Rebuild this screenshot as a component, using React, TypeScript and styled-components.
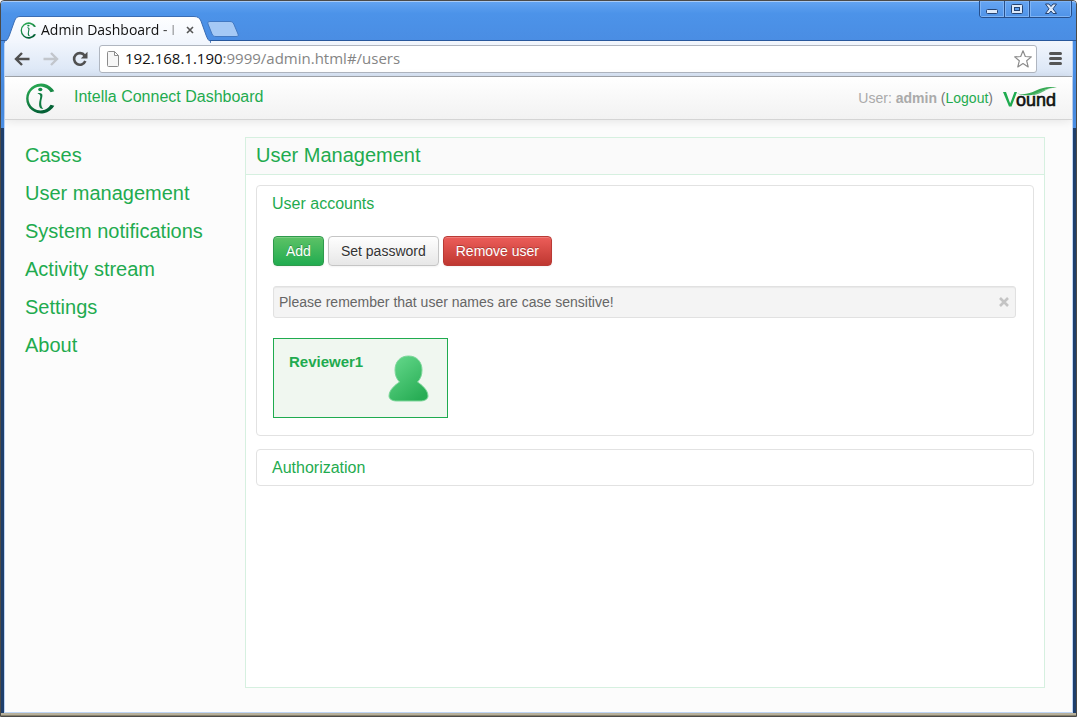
import React from "react";
import styled, { createGlobalStyle } from "styled-components";

const GREEN = "#1fab4f";

const GlobalStyle = createGlobalStyle`
  *, *::before, *::after { box-sizing: border-box; }
  body {
    margin: 0;
    font-family: "Liberation Sans", Arial, sans-serif;
    font-size: 14px;
    line-height: 20px;
    color: #666;
  }
  a { color: ${GREEN}; text-decoration: none; }
  button { font-family: inherit; }
`;

const BrowserWindow = styled.div`
  min-height: 100vh;
  display: flex;
  flex-direction: column;
  border: 1px solid #4b4a48;
  border-radius: 4px 4px 0 0;
  background: linear-gradient(#4a8fe6 0 127px, #1f3f6c 127px);
`;

const TitleBar = styled.div`
  height: 40px;
  display: flex;
  align-items: flex-start;
  justify-content: space-between;
  padding: 0 4px 0 6px;
  border-top: 1px solid #a9cbf6;
  border-bottom: 1px solid #28589c;
  border-radius: 3px 3px 0 0;
  background: linear-gradient(#62a3f1, #4c93e9 30%, #4a8de3);
`;

const TabStrip = styled.div`
  display: flex;
  align-items: flex-start;
  padding-top: 14px;
`;

const Tab = styled.div`
  position: relative;
  z-index: 1;
  width: 200px;
  height: 26px;
  display: flex;
  align-items: center;
  gap: 4px;
  padding: 2px 11px 0 13px;
`;

const TabShape = styled.svg`
  position: absolute;
  left: -3px;
  top: 0;
  z-index: -1;
`;

const TabTitle = styled.span`
  flex: 1;
  overflow: hidden;
  white-space: nowrap;
  font: 14px/20px "Open Sans", "Noto Sans", sans-serif;
  color: #111;
  mask-image: linear-gradient(90deg, #000 120px, transparent 142px);
`;

const TabClose = styled.button`
  width: 12px;
  height: 12px;
  padding: 0;
  border: 0;
  background: none;
  display: grid;
  place-items: center;
`;

const NewTab = styled.button`
  height: 18px;
  padding: 0;
  border: 0;
  margin-top: 5px;
  background: none;
`;

const WindowControls = styled.div`
  display: flex;
  height: 17px;
  border: 1px solid #264f8c;
  border-top: 0;
  border-radius: 0 0 4px 4px;
  overflow: hidden;
  margin-top: -1px;
`;

const WindowButton = styled.button<{ $width: number }>`
  width: ${(p) => p.$width}px;
  padding: 0;
  border: 0;
  background: linear-gradient(#66a5f2, #4f93e8);
  box-shadow: inset 0 0 0 1px #7fb4f5;
  display: grid;
  place-items: center;
  & + & { border-left: 1px solid #264f8c; }
`;

const Client = styled.div`
  flex: 1;
  display: flex;
  flex-direction: column;
  margin: 0 3px;
  border: 1px solid #bdd4f5;
  border-top: 0;
  background: #fcfcfc;
`;

const Toolbar = styled.div`
  display: flex;
  align-items: center;
  height: 36px;
  padding: 0 7px;
  border-bottom: 1px solid #a3a7ad;
  background: linear-gradient(#f2f6fd, #d9e5f5);
`;

const ToolButton = styled.button`
  width: 20px;
  height: 20px;
  padding: 0;
  border: 0;
  background: none;
  display: grid;
  place-items: center;
`;

const NavButtons = styled.div`
  display: flex;
  gap: 9px;
  margin-right: 9px;
`;

const AddressBar = styled.div`
  flex: 1;
  height: 28px;
  display: flex;
  align-items: center;
  gap: 6px;
  padding: 0 3px 0 7px;
  margin-right: 8px;
  border: 1px solid #b0b6c0;
  border-radius: 3px;
  background: #fff;
`;

const Address = styled.div`
  flex: 1;
  padding-bottom: 2px;
  font: 15px/20px "Open Sans", "Noto Sans", sans-serif;
  color: #858585;
  strong { font-weight: 400; color: #111; }
`;

const AppHeader = styled.header`
  display: flex;
  align-items: center;
  height: 43px;
  padding: 0 14px 0 20px;
  border-bottom: 1px solid #d4d4d4;
  background: linear-gradient(#fff, #f2f2f2);
  box-shadow: 0 1px 10px rgba(0, 0, 0, 0.1);
`;

const AppTitle = styled.a`
  flex: 1;
  margin-left: 18px;
  padding-bottom: 2px;
  font-size: 16px;
`;

const UserInfo = styled.div`
  margin-right: 10px;
  color: #aaa;
  span { color: #777; }
`;

const Body = styled.div`
  flex: 1;
  display: flex;
  padding: 17px 27px 24px 20px;
`;

const SideNav = styled.nav`
  width: 220px;
  flex: none;
  display: flex;
  flex-direction: column;
  gap: 18px;
  padding-top: 8px;
  font-size: 20px;
`;

const Panel = styled.main`
  flex: 1;
  border: 1px solid #d6f0e0;
  background: #fff;
`;

const PanelHeading = styled.h1`
  height: 37px;
  margin: 0;
  padding: 0 10px;
  border-bottom: 1px solid #d6f0e0;
  background: #fafafa;
  color: ${GREEN};
  font-size: 20px;
  font-weight: 400;
  line-height: 34px;
`;

const Sections = styled.div`
  display: flex;
  flex-direction: column;
  gap: 13px;
  padding: 10px;
`;

const Section = styled.section`
  border: 1px solid #e2e2e2;
  border-radius: 4px;
`;

const SectionHeading = styled.h2`
  margin: 0;
  padding: 8px 15px 7px;
  color: ${GREEN};
  font-size: 16px;
  font-weight: 400;
  line-height: 20px;
`;

const SectionBody = styled.div`
  display: flex;
  flex-direction: column;
  align-items: flex-start;
  gap: 20px;
  padding: 15px 17px 17px 16px;
`;

const Actions = styled.div`
  display: flex;
  gap: 4px;
`;

const tones = {
  green: { bg: "linear-gradient(#5fc367, #1fab4f)", border: "#2f9a4c", color: "#fff", shadow: "0 -1px 0 rgba(0,0,0,.25)" },
  plain: { bg: "linear-gradient(#fff, #e6e6e6)", border: "#c5c5c5", color: "#333", shadow: "0 1px 1px rgba(255,255,255,.75)" },
  red: { bg: "linear-gradient(#ee5f5b, #bd362f)", border: "#b93a35", color: "#fff", shadow: "0 -1px 0 rgba(0,0,0,.25)" },
};

const Button = styled.button<{ $tone: keyof typeof tones }>`
  padding: 4px 12px;
  border: 1px solid ${(p) => tones[p.$tone].border};
  border-radius: 4px;
  background: ${(p) => tones[p.$tone].bg} border-box;
  color: ${(p) => tones[p.$tone].color};
  text-shadow: ${(p) => tones[p.$tone].shadow};
  box-shadow: inset 0 1px 0 rgba(255, 255, 255, 0.2), 0 1px 2px rgba(0, 0, 0, 0.05);
  font-size: 14px;
  line-height: 20px;
`;

const Notice = styled.div`
  align-self: stretch;
  display: flex;
  align-items: center;
  justify-content: space-between;
  padding: 5px;
  border: 1px solid #e1e1e1;
  border-radius: 3px;
  background: #f4f4f4;
  box-shadow: inset 0 1px 1px rgba(0, 0, 0, 0.05);
`;

const NoticeClose = styled.button`
  width: 12px;
  height: 12px;
  padding: 0;
  border: 0;
  background: none;
  display: grid;
  place-items: center;
`;

const UserCard = styled.button`
  width: 175px;
  height: 80px;
  display: flex;
  align-items: flex-start;
  justify-content: space-between;
  padding: 13px 18px 15px 15px;
  border: 1px solid ${GREEN};
  background: #f0f7f0;
  color: ${GREEN};
  font-size: 15px;
  font-weight: 700;
  line-height: 20px;
`;

const UserIcon = styled.svg`
  margin-top: 3px;
`;

const BottomFrame = styled.div`
  height: 3px;
  border-bottom: 1px solid #89826e;
  background: #b7b09b;
`;

const ConnectLogo = ({ size }: { size: number }) => (
  <svg width={size} height={size} viewBox="0 0 31 31" aria-hidden="true">
    <defs>
      <linearGradient id={"ring" + size} x1="0" y1="0" x2="0.4" y2="1">
        <stop offset="0" stopColor="#2fb457" />
        <stop offset="1" stopColor="#046136" />
      </linearGradient>
    </defs>
    <path
      d="M29.300 8.300A15 15 0 1 0 29.300 22.700L25.600 21.700A11.900 11.900 0 1 1 25.600 9.300Z"
      fill={`url(#ring${size})`}
    />
    <ellipse cx="15.300" cy="6.500" rx="2.100" ry="1.700" fill="#158a48" />
    <path
      d="M12.400 10.400C15.200 9.600 17.800 10.400 17.400 13C17.200 15 16.300 17 16.200 19.500C16.100 22.500 16.800 24.600 18.300 25.600C15.600 26.400 13.900 24.400 14.100 21C14.200 18 15.200 15.500 15.300 13.500C15.400 11.800 14.300 10.800 12.400 10.400Z"
      fill="#0f7c42"
    />
  </svg>
);

const VoundLogo = () => (
  <svg width="55" height="24" viewBox="0 0 55 24" role="img" aria-label="Vound">
    <path d="M0 6H3L7.200 17.500L11.400 6H14L8.500 20.500H6Z" fill="#1fab4f" />
    <path d="M14 7.600C22 9 27 7.500 33 4.600C40 1.200 47 .2 54 2C46 1.600 41 3.600 36 6.400C30 9.400 21 10.600 14 7.600Z" fill="#38ab55" />
    <path d="M29 8.200C35 7.400 39 3 46 3C41 4.200 38 8 31 9Z" fill="#5cba76" />
    <text
      x="13"
      y="20"
      fontFamily="Liberation Sans, Arial, sans-serif"
      fontSize="18"
      fill="#111"
      stroke="#111"
      strokeWidth=".6"
    >
      ound
    </text>
  </svg>
);

const navItems = ["Cases", "User management", "System notifications", "Activity stream", "Settings", "About"];

export default function App() {
  return (
    <>
      <GlobalStyle />
      <BrowserWindow>
        <TitleBar>
          <TabStrip>
            <Tab>
              <TabShape width="207" height="27" viewBox="0 0 207 27" aria-hidden="true">
                <defs>
                  <linearGradient id="tabFill" x1="0" y1="0" x2="0" y2="1">
                    <stop offset="0" stopColor="#fdfeff" />
                    <stop offset="1" stopColor="#f2f6fd" />
                  </linearGradient>
                </defs>
                <path
                  d="M0 25.500C3 25 4 23 5.500 19L10.500 5C11.800 1.800 13 .5 16 .5H190C194 .5 195.500 2 197 5L202 19C203.500 23 204.500 25 207 25.500V27H0Z"
                  fill="url(#tabFill)"
                  stroke="#3a6db4"
                />
                <path d="M1 26.500H206" stroke="#f2f6fd" strokeWidth="2" />
              </TabShape>
              <ConnectLogo size={17} />
              <TabTitle>Admin Dashboard - I</TabTitle>
              <TabClose aria-label="Close tab">
                <svg width="8" height="8" viewBox="0 0 8 8">
                  <path d="M1 1L7 7M7 1L1 7" stroke="#555" strokeWidth="1.600" />
                </svg>
              </TabClose>
            </Tab>
            <NewTab aria-label="New tab">
              <svg width="32" height="17" viewBox="0 0 32 17">
                <path
                  d="M3 .5H23C25 .5 26 1.500 26.800 3L31 13C31.800 15 31 15.500 29 15.500H9C7 15.500 6 15 5 13L1 3C.4 1.500 1 .5 3 .5Z"
                  fill="#a5c9f5"
                  stroke="#4279c2"
                />
              </svg>
            </NewTab>
          </TabStrip>
          <WindowControls>
            <WindowButton $width={24} aria-label="Minimize">
              <svg width="12" height="12" viewBox="0 0 12 12">
                <rect x=".5" y="6.500" width="11" height="4" rx="1" fill="#dce9fa" stroke="#264370" />
              </svg>
            </WindowButton>
            <WindowButton $width={25} aria-label="Maximize">
              <svg width="12" height="11" viewBox="0 0 12 11">
                <rect x=".5" y=".5" width="11" height="9" rx="1" fill="#dce9fa" stroke="#264370" />
                <rect x="3.500" y="3.500" width="5" height="3" fill="#5b9bec" stroke="#264370" />
              </svg>
            </WindowButton>
            <WindowButton $width={42} aria-label="Close">
              <svg width="12" height="12" viewBox="0 0 12 12">
                <path d="M.5 1H4L6 3.500L8 1H11.500L8 5.800L11.500 10.500H8L6 8L4 10.500H.5L4 5.800Z" fill="#dce9fa" stroke="#264370" />
              </svg>
            </WindowButton>
          </WindowControls>
        </TitleBar>

        <Client>
          <Toolbar>
            <NavButtons>
              <ToolButton aria-label="Back">
                <svg width="16" height="14" viewBox="0 0 16 14" fill="none" stroke="#505050" strokeWidth="2.400">
                  <path d="M15.500 7H2.500M8 1L2 7L8 13" />
                </svg>
              </ToolButton>
              <ToolButton aria-label="Forward">
                <svg width="16" height="14" viewBox="0 0 16 14" fill="none" stroke="#c2c6cc" strokeWidth="2.400">
                  <path d="M.5 7H13.500M8 1L14 7L8 13" />
                </svg>
              </ToolButton>
              <ToolButton aria-label="Reload">
                <svg width="16" height="16" viewBox="0 0 16 16" fill="none">
                  <path d="M12.600 4.500A5.800 5.800 0 1 0 13.300 10" stroke="#505050" strokeWidth="2.600" />
                  <path d="M15.500 .8V7.500H8.800Z" fill="#505050" />
                </svg>
              </ToolButton>
            </NavButtons>
            <AddressBar>
              <svg width="12" height="16" viewBox="0 0 12 16" fill="#f7f7f7" stroke="#8c8c8c" aria-hidden="true">
                <path d="M.5 1.500Q.5 .5 1.500 .5H7.500L11.500 4.500V14.500Q11.500 15.500 10.500 15.500H1.500Q.5 15.500 .5 14.500ZM7.500 .5V4.500H11.500" />
              </svg>
              <Address>
                <strong>192.168.1.190</strong>:9999/admin.html#/users
              </Address>
              <ToolButton aria-label="Bookmark this page">
                <svg width="18" height="18" viewBox="0 0 18 18" fill="#fff" stroke="#8c8c8c" strokeWidth="1.200" strokeLinejoin="round">
                  <path d="M9 .8L11.300 6.500L17.300 6.900L12.700 10.800L14.200 16.900L9 13.600L3.800 16.900L5.300 10.800L.7 6.900L6.700 6.500Z" />
                </svg>
              </ToolButton>
            </AddressBar>
            <ToolButton aria-label="Menu">
              <svg width="13" height="13" viewBox="0 0 13 13" stroke="#555" strokeWidth="3" strokeLinecap="round">
                <path d="M1.500 1.500H11.500M1.500 6.500H11.500M1.500 11.500H11.500" />
              </svg>
            </ToolButton>
          </Toolbar>

          <AppHeader>
            <ConnectLogo size={31} />
            <AppTitle href="#/">Intella Connect Dashboard</AppTitle>
            <UserInfo>
              User: <b>admin</b> <span>(</span>
              <a href="#/logout">Logout</a>
              <span>)</span>
            </UserInfo>
            <VoundLogo />
          </AppHeader>

          <Body>
            <SideNav>
              {navItems.map((item) => (
                <a key={item} href="#/users">
                  {item}
                </a>
              ))}
            </SideNav>
            <Panel>
              <PanelHeading>User Management</PanelHeading>
              <Sections>
                <Section>
                  <SectionHeading>User accounts</SectionHeading>
                  <SectionBody>
                    <Actions>
                      <Button $tone="green">Add</Button>
                      <Button $tone="plain">Set password</Button>
                      <Button $tone="red">Remove user</Button>
                    </Actions>
                    <Notice>
                      Please remember that user names are case sensitive!
                      <NoticeClose aria-label="Dismiss">
                        <svg width="10" height="10" viewBox="0 0 10 10">
                          <path d="M1 1L9 9M9 1L1 9" stroke="#c4c4c4" strokeWidth="2.600" />
                        </svg>
                      </NoticeClose>
                    </Notice>
                    <UserCard>
                      Reviewer1
                      <UserIcon width="41" height="47" viewBox="0 0 41 47" aria-hidden="true">
                        <defs>
                          <linearGradient id="person" x1="0" y1="0" x2="0.700" y2="1">
                            <stop offset="0" stopColor="#68db8e" />
                            <stop offset="1" stopColor="#28ad55" />
                          </linearGradient>
                        </defs>
                        <path
                          d="M20.500 1C29 1 34 7 34 15C34 20 32.500 24 29.500 27C34 30 40 35 40 41C40 44 37 46 32 46H9C4 46 1 44 1 41C1 35 7 30 11.500 27C8.500 24 7 20 7 15C7 7 12 1 20.500 1Z"
                          fill="url(#person)"
                          stroke="#7ed79b"
                        />
                      </UserIcon>
                    </UserCard>
                  </SectionBody>
                </Section>
                <Section>
                  <SectionHeading>Authorization</SectionHeading>
                </Section>
              </Sections>
            </Panel>
          </Body>
        </Client>
        <BottomFrame />
      </BrowserWindow>
    </>
  );
}
